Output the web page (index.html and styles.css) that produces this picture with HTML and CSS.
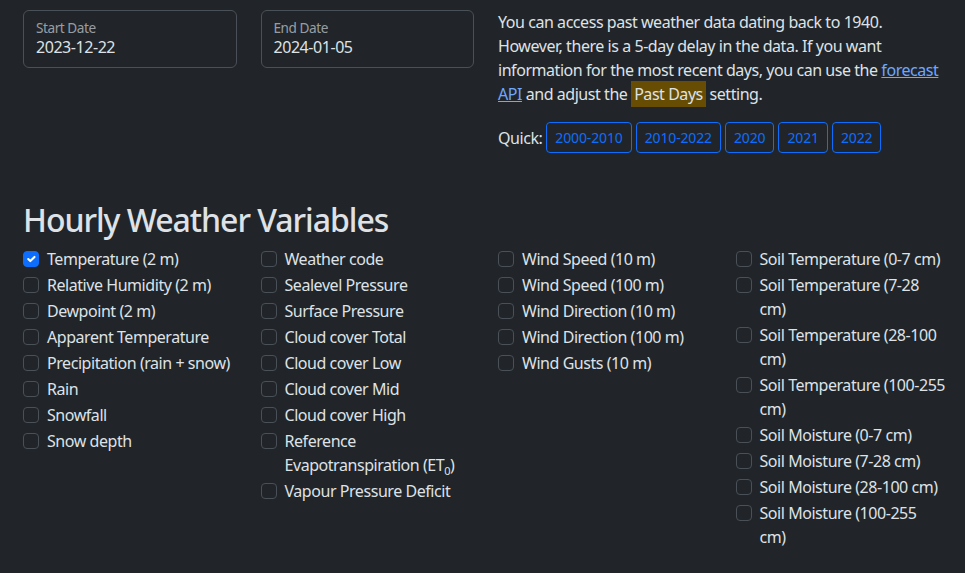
FILE: index.html
```html
<!DOCTYPE html>
<html lang="en">
<head>
    <meta charset="UTF-8">
    <title>Historical Weather API</title>
    <meta name="viewport" content="width=device-width, initial-scale=1.0">
    <link rel="stylesheet" href="styles.css">
</head>
<body>
    <div class="container">
        <div class="grid top">
            <div class="field">
                <label>Start Date</label>
                <div class="value">2023-12-22</div>
            </div>
            <div class="field">
                <label>End Date</label>
                <div class="value">2024-01-05</div>
            </div>
            <div class="info">
                <p>You can access past weather data dating back to 1940. However, there is a 5-day delay in the data. If you want information for the most recent days, you can use the <a href="#">forecast API</a> and adjust the <mark>Past Days</mark> setting.</p>
                <div class="quick">
                    <span>Quick:</span>
                    <button class="btn">2000-2010</button>
                    <button class="btn">2010-2022</button>
                    <button class="btn">2020</button>
                    <button class="btn">2021</button>
                    <button class="btn">2022</button>
                </div>
            </div>
        </div>

        <h2>Hourly Weather Variables</h2>

        <div class="grid vars">
            <div class="col">
                <label class="check"><span class="box checked"></span>Temperature (2 m)</label>
                <label class="check"><span class="box"></span>Relative Humidity (2 m)</label>
                <label class="check"><span class="box"></span>Dewpoint (2 m)</label>
                <label class="check"><span class="box"></span>Apparent Temperature</label>
                <label class="check"><span class="box"></span>Precipitation (rain + snow)</label>
                <label class="check"><span class="box"></span>Rain</label>
                <label class="check"><span class="box"></span>Snowfall</label>
                <label class="check"><span class="box"></span>Snow depth</label>
            </div>
            <div class="col">
                <label class="check"><span class="box"></span>Weather code</label>
                <label class="check"><span class="box"></span>Sealevel Pressure</label>
                <label class="check"><span class="box"></span>Surface Pressure</label>
                <label class="check"><span class="box"></span>Cloud cover Total</label>
                <label class="check"><span class="box"></span>Cloud cover Low</label>
                <label class="check"><span class="box"></span>Cloud cover Mid</label>
                <label class="check"><span class="box"></span>Cloud cover High</label>
                <label class="check"><span class="box"></span>Reference Evapotranspiration (ET<sub>0</sub>)</label>
                <label class="check"><span class="box"></span>Vapour Pressure Deficit</label>
            </div>
            <div class="col">
                <label class="check"><span class="box"></span>Wind Speed (10 m)</label>
                <label class="check"><span class="box"></span>Wind Speed (100 m)</label>
                <label class="check"><span class="box"></span>Wind Direction (10 m)</label>
                <label class="check"><span class="box"></span>Wind Direction (100 m)</label>
                <label class="check"><span class="box"></span>Wind Gusts (10 m)</label>
            </div>
            <div class="col">
                <label class="check"><span class="box"></span>Soil Temperature (0-7 cm)</label>
                <label class="check"><span class="box"></span>Soil Temperature (7-28<br>cm)</label>
                <label class="check"><span class="box"></span>Soil Temperature (28-100 cm)</label>
                <label class="check"><span class="box"></span>Soil Temperature (100-255 cm)</label>
                <label class="check"><span class="box"></span>Soil Moisture (0-7 cm)</label>
                <label class="check"><span class="box"></span>Soil Moisture (7-28 cm)</label>
                <label class="check"><span class="box"></span>Soil Moisture (28-100 cm)</label>
                <label class="check"><span class="box"></span>Soil Moisture (100-255<br>cm)</label>
            </div>
        </div>
    </div>
</body>
</html>
```

FILE: styles.css
```css
* {
    box-sizing: border-box;
    margin: 0;
    padding: 0;
}

html, body {
    height: 100%;
    overflow: hidden;
    font-family: "Noto Sans", "Open Sans", sans-serif;
    font-size: 16px;
    line-height: 24px;
    letter-spacing: -0.028em;
    color: #dee2e6;
    background-color: #212529;
}

.container {
    padding: 10px 16px 0 23px;
}

.grid {
    display: grid;
    grid-template-columns: repeat(4, 1fr);
    column-gap: 24px;
}

/* date fields */
.field {
    height: 58px;
    border: 1px solid #495057;
    border-radius: 6px;
    padding: 8px 12px 0 12px;
}

.field label {
    display: block;
    font-size: 13.6px;
    line-height: 18px;
    color: rgba(222, 226, 230, 0.65);
}

.field .value {
    line-height: 20px;
}

.info {
    grid-column: span 2;
}

.info p {
    margin-bottom: 16px;
}

a {
    color: #6ea8fe;
}

mark {
    background-color: #664d03;
    color: #dee2e6;
    padding: 2px 3px;
}

.quick {
    display: flex;
    align-items: center;
    gap: 4px;
}

.btn {
    font-family: inherit;
    font-size: 14px;
    line-height: 21px;
    letter-spacing: -0.01em;
    padding: 4px 8px;
    color: #0d6efd;
    background: transparent;
    border: 1px solid #0d6efd;
    border-radius: 4px;
    cursor: pointer;
}

.btn:hover {
    background-color: #0d6efd;
    color: #fff;
}

h2 {
    margin-top: 48px;
    margin-bottom: 8px;
    font-size: 32px;
    line-height: 38px;
    font-weight: 500;
    letter-spacing: -0.032em;
}

/* checkbox lists */
.check {
    display: block;
    position: relative;
    padding-left: 24px;
    min-height: 24px;
    margin-bottom: 2px;
    cursor: pointer;
}

.box {
    position: absolute;
    left: 0;
    top: 4px;
    width: 16px;
    height: 16px;
    border: 1px solid #495057;
    border-radius: 4px;
    background-color: #212529;
}

.box.checked {
    background-color: #0d6efd;
    border-color: #0d6efd;
    background-image: url("data:image/svg+xml,%3csvg xmlns='http://www.w3.org/2000/svg' viewBox='0 0 20 20'%3e%3cpath fill='none' stroke='%23fff' stroke-linecap='round' stroke-linejoin='round' stroke-width='3' d='m6 10 3 3 6-6'/%3e%3c/svg%3e");
    background-size: 100% 100%;
}

sub {
    font-size: 11px;
    line-height: 0;
}
```
